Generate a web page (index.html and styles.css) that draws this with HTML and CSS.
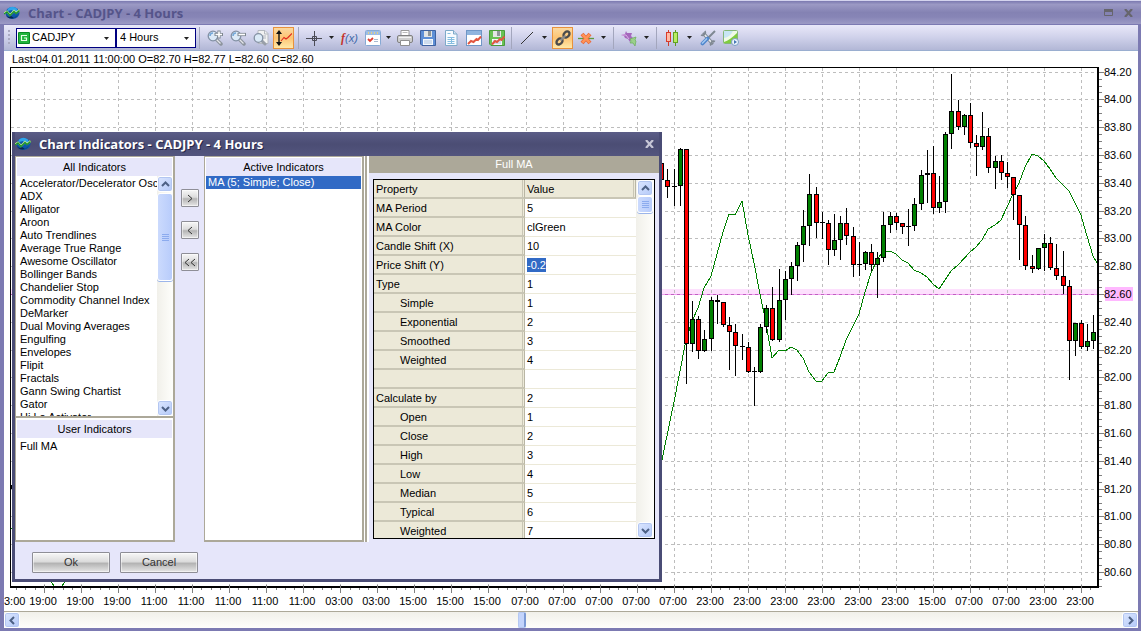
FILE: index.html
```html
<!DOCTYPE html>
<html lang="en">
<head>
<meta charset="utf-8">
<title>Chart - CADJPY - 4 Hours</title>
<link rel="stylesheet" href="styles.css">
</head>
<body>
<svg class="defs" aria-hidden="true">
  <defs>
    <symbol id="globe" viewBox="0 0 16 14">
      <ellipse cx="8.500" cy="7" rx="7" ry="6" fill="#0d56a8"/>
      <path d="M3.500 3Q8-1 13 2.500L14 6 10 7 8 4 4 5Z" fill="#2fa4ea"/>
      <path d="M2 9l2 2 3-1 3 2 4-3Q9 15 3 11Z" fill="#07284f"/>
      <path d="M0 7.500l3-2 3 3.500 4-4 2 2 3.500-3" fill="none" stroke="#c9ee9a" stroke-width="2"/>
      <path d="M0 8l3-2 3 3.500 4-4 2 2 3.500-3" fill="none" stroke="#178f2c" stroke-width="1.400"/>
    </symbol>
    <symbol id="up" viewBox="0 0 9 9"><path d="M1 6L4.500 2.500 8 6" fill="none" stroke="#4d6185" stroke-width="2"/></symbol>
    <symbol id="down" viewBox="0 0 9 9"><path d="M1 3L4.500 6.500 8 3" fill="none" stroke="#4d6185" stroke-width="2"/></symbol>
    <symbol id="left" viewBox="0 0 9 9"><path d="M6 1L2.500 4.500 6 8" fill="none" stroke="#4d6185" stroke-width="2"/></symbol>
    <symbol id="right" viewBox="0 0 9 9"><path d="M3 1L6.500 4.500 3 8" fill="none" stroke="#4d6185" stroke-width="2"/></symbol>
    <symbol id="caret" viewBox="0 0 5 3"><path d="M0 0H5L2.500 3Z" fill="#222"/></symbol>
    <symbol id="lens" viewBox="0 0 16 16">
      <path d="M9 9l5 5" stroke="#8d949e" stroke-width="3.500" stroke-linecap="round"/>
      <path d="M9 9l4.500 4.500" stroke="#e4e6ea" stroke-width="1.200"/>
      <circle cx="6" cy="6" r="4.800" fill="#dceaf8" stroke="#8290a4" stroke-width="1.300"/>
      <path d="M3 6a3 3 0 0 1 3-3" fill="none" stroke="#74a7d8" stroke-width="1.500"/>
    </symbol>
    <symbol id="floppy" viewBox="0 0 16 16">
      <path d="M.5.5h15v15H2L.5 14Z" stroke-width="1"/>
      <path d="M4 1h8v6H4Z" fill="#e4e6e6" stroke="none"/><path d="M8 1h3v5H8Z" fill="#8f9599" stroke="none"/>
      <path d="M3 9h10v6H3Z" fill="#f4f8fd" stroke="none"/>
      <path d="M4 11h8M4 13h8" stroke="#a8c0de"/>
    </symbol>
  </defs>
</svg>
<main class="window">
  <header class="titlebar">
    <svg class="globe"><use href="#globe"/></svg>
    <h1 class="title">Chart - CADJPY - 4 Hours</h1>
    <button class="winbtn" aria-label="Maximize"><svg width="9" height="7"><path d="M.5.5h8v6h-8Z" fill="none" stroke="#66656c"/><path d="M0 0h9v3H0Z" fill="#66656c"/></svg></button>
    <button class="winbtn" aria-label="Close"><svg width="9" height="8"><path d="M1 0l7 8M8 0L1 8" stroke="#66656c" stroke-width="2.200"/></svg></button>
  </header>
  <div class="body">
    <nav class="toolbar" aria-label="Chart tools">
      <span class="grip"></span>
      <div class="combo combo-symbol">
        <svg class="flag" viewBox="0 0 12 12"><rect width="12" height="12" rx="1" fill="#0a8a24"/><rect x="1" y="1" width="10" height="10" fill="#22b53c"/><path d="M9 3.500H3.500v5H8.500V6H6" fill="none" stroke="#e8ffe8" stroke-width="1.200"/></svg>
        <select aria-label="Symbol"><option>CADJPY</option></select>
        <svg class="caret"><use href="#caret"/></svg>
      </div>
      <div class="combo combo-period">
        <select aria-label="Period"><option>4 Hours</option></select>
        <svg class="caret"><use href="#caret"/></svg>
      </div>
      <span class="sep"></span>
      <button class="tool" aria-label="Zoom in"><svg viewBox="0 0 16 16"><use href="#lens"/><path d="M7.500 4.500h8.500M12 .5v8" stroke="#7e8790" stroke-width="3.200"/><path d="M8.500 4.500h6.500M12 1.500v6" stroke="#fff" stroke-width="1.600"/></svg></button>
      <button class="tool" aria-label="Zoom out"><svg viewBox="0 0 16 16"><use href="#lens"/><path d="M7.500 4.500h8.500" stroke="#7e8790" stroke-width="3.200"/><path d="M8.500 4.500h6.500" stroke="#fff" stroke-width="1.600"/></svg></button>
      <button class="tool" aria-label="Zoom to fit"><svg viewBox="0 0 16 16"><path d="M5 .5h7l3 3v10H5Z" fill="#f2f2f2" stroke="#b5b9c0"/><path d="M11.500.5v3.500H15M8 6h5M9 8h4" fill="none" stroke="#b5b9c0"/><path d="M9 11l3 3" stroke="#999fa8" stroke-width="3" stroke-linecap="round"/><circle cx="5.500" cy="8" r="4.300" fill="#dbeaf7" stroke="#8491a3" stroke-width="1.300"/></svg></button>
      <button class="tool tool-on" aria-label="Scale" aria-pressed="true"><svg viewBox="0 0 16 16"><path d="M3 2v12" stroke="#111" stroke-width="1.400"/><path d="M0 4L3 0l3 4ZM0 12l3 4 3-4Z" fill="#111"/><path d="M5 11l3-3.500 2 1.500 2-1.500 4-4" fill="none" stroke="#e02a20" stroke-width="1.100"/></svg></button>
      <span class="sep"></span>
      <button class="tool" aria-label="Crosshair"><svg viewBox="0 0 16 16"><path d="M0 8.500h16M8.500 1v15" stroke="#4b4b55"/><path d="M6.500 6.500h4v4h-4Z" fill="none" stroke="#4b4b55"/></svg></button>
      <button class="drop" aria-label="Crosshair options"><svg><use href="#caret"/></svg></button>
      <button class="tool fx" aria-label="Indicators"><b>f</b><i>(x)</i></button>
      <button class="tool" aria-label="Templates"><svg viewBox="0 0 16 16"><rect x=".5" y=".5" width="15" height="15" rx="1" fill="#fff" stroke="#86a9d4"/><path d="M1 1h14v4H1Z" fill="#9dbde6"/><path d="M3 3h1M6 3h1M9 3h1M12 3h1" stroke="#f7d66b" stroke-width="1.500"/><path d="M3 9l2 2 3-3" fill="none" stroke="#dd3e33" stroke-width="1.800"/><path d="M9 9.500h4M9 11.500h4" stroke="#a9bad0"/></svg></button>
      <button class="drop drop-narrow" aria-label="Template options"><svg><use href="#caret"/></svg></button>
      <button class="tool" aria-label="Print"><svg viewBox="0 0 16 16"><path d="M4 6V.5h8V6" fill="#fff" stroke="#9a9a9a"/><path d="M5.500 2.500h5" stroke="#bbb"/><rect x=".5" y="5.500" width="15" height="7" rx="1.500" fill="#cfcfcf" stroke="#808080"/><path d="M2 7.500h12" stroke="#f3f3f3"/><path d="M3.500 10.500h9v5h-9Z" fill="#fff" stroke="#909090"/></svg></button>
      <button class="tool" aria-label="Save"><svg viewBox="0 0 16 16" fill="#5f8fd6" stroke="#3f62a0"><use href="#floppy"/></svg></button>
      <button class="tool" aria-label="Report"><svg viewBox="0 0 16 16"><path d="M2.500.5h8l3.500 3.500v11.500H2.500Z" fill="#f7fbff" stroke="#7ea9c9"/><path d="M10.500.5v3.500H14" fill="#cfe2f2" stroke="#7ea9c9"/><path d="M4.500 7.500h7M4.500 9.500h7M4.500 11.500h7M4.500 13.500h7M8.500 7v7M4.500 3.500h3" stroke="#85bde0"/></svg></button>
      <button class="tool" aria-label="Load chart"><svg viewBox="0 0 16 16"><rect x=".5" y=".5" width="15" height="15" fill="#fff" stroke="#6f96c6"/><path d="M1 1h14v4H1Z" fill="#8fb4de"/><path d="M2 14l3-3 2.500 1 3-3 1.500 1 3-3.500" fill="none" stroke="#e2553f" stroke-width="2"/></svg></button>
      <button class="tool" aria-label="Save chart"><svg viewBox="0 0 16 16" fill="#68c254" stroke="#4a9a3b"><use href="#floppy"/><path d="M3 14.500l3-3.500 2 1 3-3 1.500 1 3-3.500" fill="none" stroke="#e2553f" stroke-width="2"/></svg></button>
      <span class="sep"></span>
      <button class="tool" aria-label="Line"><svg viewBox="0 0 16 16"><path d="M2 14L14 2" stroke="#333"/></svg></button>
      <button class="drop" aria-label="Line options"><svg><use href="#caret"/></svg></button>
      <button class="tool tool-on" aria-label="Link" aria-pressed="true"><svg viewBox="0 0 16 16"><g fill="none" stroke="#4b4b4b" stroke-width="2.400"><ellipse cx="11.500" cy="4.500" rx="3.400" ry="2.500" transform="rotate(-45 11.500 4.500)"/><ellipse cx="4.500" cy="11.500" rx="3.400" ry="2.500" transform="rotate(-45 4.500 11.500)"/></g><path d="M5.500 10.500l5-5" stroke="#8b8b8b" stroke-width="2"/></svg></button>
      <button class="tool" aria-label="Delete object"><svg viewBox="0 0 16 16"><path d="M0 8.500h16" stroke="#5e9a3e" stroke-width="1.300"/><path d="M4 4l8 9M12 4l-8 9" stroke="#e8693b" stroke-width="4"/><path d="M4.500 4.500l7 8M11.500 4.500l-7 8" stroke="#ff9457" stroke-width="2.500"/></svg></button>
      <button class="drop" aria-label="Delete options"><svg><use href="#caret"/></svg></button>
      <span class="sep"></span>
      <button class="tool" aria-label="Signals"><svg viewBox="0 0 16 16"><path d="M0 5l4-1 1-3 1 2 5 0-1 3 2 2-2 1-1 3-2-3-3-1-1-2Z" fill="#a568bd"/><path d="M1 5l4 0 3 4" fill="none" stroke="#dcb0e8"/><path d="M9 9l6-2-1 3 1 1-1 5-2-3-3 0 1-2Z" fill="#9ad08a" stroke="#6aae58" stroke-width=".7"/></svg></button>
      <button class="drop" aria-label="Signal options"><svg><use href="#caret"/></svg></button>
      <span class="sep"></span>
      <button class="tool" aria-label="Chart type"><svg viewBox="0 0 16 16"><path d="M4.500 0v16" stroke="#cc3b2e"/><rect x="2.500" y="2.500" width="4" height="9" fill="#ffb9a5" stroke="#d93b2b"/><path d="M11.500 0v16" stroke="#5c9a22"/><rect x="9.500" y="2.500" width="4" height="10" fill="#b8ec62" stroke="#62a322"/></svg></button>
      <button class="drop" aria-label="Chart type options"><svg><use href="#caret"/></svg></button>
      <button class="tool" aria-label="Settings"><svg viewBox="0 0 16 16"><path d="M4 4l8 9" stroke="#7f8892" stroke-width="3.400" stroke-linecap="round"/><path d="M4 4l8 9" stroke="#e8ebee" stroke-width="1.800"/><path d="M1 5a3 3 0 0 0 4-4M11 15.500a3 3 0 0 1 4-4" fill="none" stroke="#7f8892" stroke-width="1.800"/><path d="M15 1L8 8" stroke="#7f8892" stroke-width="2"/><path d="M7.500 8.500l-5 5" stroke="#4f86cc" stroke-width="3.800" stroke-linecap="round"/><path d="M7 8.500l-5 5" stroke="#a5caf2" stroke-width="1.400"/></svg></button>
      <button class="tool" aria-label="Replay"><svg viewBox="0 0 16 16"><rect x=".5" y=".5" width="14" height="13" rx="1" fill="#f0fae6" stroke="#84b778"/><path d="M1 12Q7 10 14 3v10H1Z" fill="#80cc3f"/><path d="M1 8Q7 7 10 1H1Z" fill="#c8e6f4"/><circle cx="12" cy="12" r="3.500" fill="#eef5fc" stroke="#7b9dc4"/><path d="M11 10l3 2-3 2Z" fill="#4576b4"/></svg></button>
    </nav>
    <p class="info">Last:04.01.2011 11:00:00 O=82.70 H=82.77 L=82.60 C=82.60</p>
    <svg class="chart" id="chart" viewBox="4 67 1134 544" role="img" aria-label="CADJPY candlestick chart"></svg>
    <div class="hscroll">
      <button class="sbtn" aria-label="Scroll left"><svg><use href="#left"/></svg></button>
      <div class="htrack"><span class="hthumb"></span></div>
      <button class="sbtn" aria-label="Scroll right"><svg><use href="#right"/></svg></button>
    </div>
  </div>

  <section class="dialog" role="dialog" aria-labelledby="dlg-title">
    <header class="dlg-head">
      <svg class="globe"><use href="#globe"/></svg>
      <h2 class="title" id="dlg-title">Chart Indicators - CADJPY - 4 Hours</h2>
      <button class="winbtn" aria-label="Close dialog"><svg width="9" height="8"><path d="M1 0l7 8M8 0L1 8" stroke="#c6c6d6" stroke-width="2.200"/></svg></button>
    </header>
    <div class="dlg-body">
      <div class="panel">
        <h3 class="panel-head">All Indicators</h3>
        <div class="list-wrap">
          <ul class="list">
            <li>Accelerator/Decelerator Osc</li><li>ADX</li><li>Alligator</li><li>Aroon</li><li>Auto Trendlines</li><li>Average True Range</li><li>Awesome Oscillator</li><li>Bollinger Bands</li><li>Chandelier Stop</li><li>Commodity Channel Index</li><li>DeMarker</li><li>Dual Moving Averages</li><li>Engulfing</li><li>Envelopes</li><li>Flipit</li><li>Fractals</li><li>Gann Swing Chartist</li><li>Gator</li><li>Hi Lo Activator</li>
          </ul>
          <div class="vscroll">
            <button class="sbtn" aria-label="Scroll up"><svg><use href="#up"/></svg></button>
            <span class="vthumb vthumb-long"></span>
            <button class="sbtn sbtn-end" aria-label="Scroll down"><svg><use href="#down"/></svg></button>
          </div>
        </div>
        <h3 class="panel-head panel-head-user">User Indicators</h3>
        <ul class="list list-user"><li>Full MA</li></ul>
      </div>
      <div class="movers">
        <button class="metal mover" aria-label="Add"><svg viewBox="0 0 10 9"><path d="M3 1l4 3.500L3 8" /></svg></button>
        <button class="metal mover" aria-label="Remove"><svg viewBox="0 0 10 9"><path d="M7 1L3 4.500 7 8" /></svg></button>
        <button class="metal mover" aria-label="Remove all"><svg viewBox="0 0 10 9"><path d="M4 1L0 4.500 4 8M10 1L6 4.500 10 8" /></svg></button>
      </div>
      <div class="panel">
        <h3 class="panel-head">Active Indicators</h3>
        <ul class="list list-active"><li class="picked">MA (5; Simple; Close)</li></ul>
      </div>
      <span class="splitter"></span>
      <div class="props">
        <h3 class="props-head">Full MA</h3>
        <div class="grid">
          <table>
            <thead><tr><th scope="col">Property</th><th scope="col">Value</th></tr></thead>
            <tbody>
              <tr><th scope="row">MA Period</th><td>5</td></tr>
              <tr><th scope="row">MA Color</th><td>clGreen</td></tr>
              <tr><th scope="row">Candle Shift (X)</th><td>10</td></tr>
              <tr><th scope="row"><label for="shift-y">Price Shift (Y)</label></th><td><input id="shift-y" class="edit" value="-0.2"></td></tr>
              <tr><th scope="row">Type</th><td>1</td></tr>
              <tr><th scope="row" class="sub">Simple</th><td>1</td></tr>
              <tr><th scope="row" class="sub">Exponential</th><td>2</td></tr>
              <tr><th scope="row" class="sub">Smoothed</th><td>3</td></tr>
              <tr><th scope="row" class="sub">Weighted</th><td>4</td></tr>
              <tr><th></th><td></td></tr>
              <tr><th scope="row">Calculate by</th><td>2</td></tr>
              <tr><th scope="row" class="sub">Open</th><td>1</td></tr>
              <tr><th scope="row" class="sub">Close</th><td>2</td></tr>
              <tr><th scope="row" class="sub">High</th><td>3</td></tr>
              <tr><th scope="row" class="sub">Low</th><td>4</td></tr>
              <tr><th scope="row" class="sub">Median</th><td>5</td></tr>
              <tr><th scope="row" class="sub">Typical</th><td>6</td></tr>
              <tr><th scope="row" class="sub">Weighted</th><td>7</td></tr>
            </tbody>
          </table>
          <div class="vscroll">
            <button class="sbtn" aria-label="Scroll up"><svg><use href="#up"/></svg></button>
            <span class="vthumb"></span>
            <button class="sbtn sbtn-end" aria-label="Scroll down"><svg><use href="#down"/></svg></button>
          </div>
        </div>
      </div>
    </div>
    <footer class="dlg-foot">
      <button class="metal push">Ok</button>
      <button class="metal push">Cancel</button>
    </footer>
  </section>
</main>
<script src="chart.js"></script>
</body>
</html>
```
FILE: styles.css
```css
* { box-sizing: border-box; }
body { margin: 0; font: 11px/13px "Liberation Sans", Arial, sans-serif; color: #000; background: #fff; }
h1, h2, h3, p, ul { margin: 0; padding: 0; font-size: inherit; font-weight: normal; }
ul { list-style: none; }
button, select, input { font: inherit; color: inherit; margin: 0; padding: 0; border: 0; background: none; border-radius: 0; }
svg { display: block; }
.defs { position: absolute; width: 0; height: 0; }

.window { position: relative; min-height: 100vh; display: flex; flex-direction: column; border-top: 1px solid #d4d4ee; background: #7c7ab2; }
.titlebar { display: flex; align-items: center; gap: 8px; height: 23px; padding: 0 7px 0 4px; background: linear-gradient(#7b79b0, #9b99c4 15%, #8482b3 50%, #8785b6 70%, #9c9ac5); }
.globe { width: 16px; height: 14px; flex: none; }
.title { flex: 1; font: bold 13px/20px "Open Sans", "Noto Sans", sans-serif; color: #55548a; white-space: nowrap; }
.winbtn { width: 12px; height: 12px; display: grid; place-items: center; }
.body { flex: 1; display: flex; flex-direction: column; margin: 1px 3px 3px 4px; background: #fff; }

.toolbar { display: flex; align-items: center; height: 26px; padding-left: 4px; background: linear-gradient(#e9e8f9, #cfd1ea 50%, #b2b7d6); border-bottom: 1px solid #9aaed0; }
.grip { width: 2px; height: 15px; margin-right: 6px; background: repeating-linear-gradient(#aaaac2 0 2px, transparent 2px 4px); }
.combo { position: relative; display: flex; align-items: center; height: 20px; background: #fff; border: 1px solid #000080; }
.combo-symbol { width: 100px; padding-left: 1px; }
.combo-period { width: 80px; padding-left: 3px; }
.combo select { flex: 1; min-width: 0; height: 18px; appearance: none; outline: 0; }
.flag { width: 12px; height: 12px; margin-right: 2px; }
.caret { position: absolute; right: 6px; top: 8px; width: 5px; height: 3px; pointer-events: none; }
.sep { width: 1px; height: 22px; margin: 0 3px; background: #a3a6bd; }
.tool { width: 23px; height: 22px; display: grid; place-items: center; flex: none; }
.tool svg { width: 16px; height: 16px; }
.tool-on { border: 1px solid #e8923c; background: linear-gradient(#fbd9a0, #fdc473 50%, #ffe9a8); margin: 0 1px; width: 21px; }
.drop { width: 13px; height: 22px; display: grid; place-items: center; flex: none; }
.drop-narrow { width: 9px; }
.drop svg { width: 5px; height: 3px; }
.fx { display: flex; align-items: center; justify-content: center; font: italic bold 12px/16px "Liberation Serif", serif; color: #c4342c; }
.fx i { font: italic 11px/16px "Liberation Sans", sans-serif; color: #4168a8; }

.info { height: 16px; padding-left: 8px; line-height: 16px; }
.chart { width: 100%; height: auto; }
.chart text { font: 11px "Liberation Sans", Arial, sans-serif; }

.sbtn { width: 16px; height: 16px; flex: none; display: grid; place-items: center; border: 1px solid #fff; border-radius: 3px; background: linear-gradient(135deg, #dbe6ff, #b4c9f8); box-shadow: inset 0 0 0 1px #b3c6f1; }
.sbtn svg { width: 9px; height: 9px; }
.sbtn-end { margin-top: auto; }
.hscroll { display: flex; height: 17px; border-top: 1px solid #aca899; background: linear-gradient(#f1f0ea, #fefefb); }
.htrack { flex: 1; display: flex; }
.hthumb { width: 8px; height: 16px; margin-left: 45.2%; border: 1px solid #b4c8f2; border-right: 2px solid #7d9bd6; border-radius: 2px; background: #c3d4fc; }
.vscroll { width: 16px; display: flex; flex-direction: column; background: linear-gradient(90deg, #f1f0ea, #fefefb); }
.vthumb { height: 17px; border: 1px solid #fff; border-radius: 3px; background: repeating-linear-gradient(#8cabee 0 1px, transparent 1px 2px) center / 7px 7px no-repeat, linear-gradient(90deg, #cbdafd, #b8ccfb); box-shadow: 0 1px #9cb5ea; }
.vthumb-long { height: 88px; margin-top: 1px; }

.dialog { position: absolute; left: 12px; top: 131px; width: 650px; border: solid #4a4c75; border-width: 0 3px 3px; background: #e6e6fa; }
.dlg-head { display: flex; align-items: center; gap: 8px; height: 24px; padding-right: 4px; background: linear-gradient(#5b5d87, #4b4d74 50%, #53557e); }
.dlg-head .title { color: #fff; text-shadow: 1px 1px #25264a; }
.dlg-body { display: flex; height: 386px; }
.panel { width: 160px; display: flex; flex-direction: column; background: #fff; border: solid #aca899; border-width: 1px 2px 2px 1px; }
.panel-head { height: 18px; margin: 1px 1px 0; line-height: 18px; text-align: center; background: #e6e6fa; }
.panel-head-user { height: 20px; border-top: 2px solid #fff; margin-top: 0; }
.list-wrap { display: flex; height: 242px; overflow: hidden; border-bottom: 2px solid #aca899; }
.list { flex: 1; padding: 1px 1px 0 4px; white-space: nowrap; overflow: hidden; }
.list-user { padding-top: 2px; }
.list-active { padding: 0 1px; }
.picked { padding: 0 2px; background: #316ac5; color: #fff; }
.movers { width: 29px; padding: 33px 6px 0 6px; display: flex; flex-direction: column; gap: 14px; }
.metal { border: 1px solid #8e8e96; border-radius: 1px; color: #333; background: linear-gradient(#f7f7f7, #dcdcdc 45%, #b4b4b4 55%, #e6e6e6); box-shadow: inset 0 0 0 1px #ffffff80; }
.mover { width: 18px; height: 18px; display: grid; place-items: center; }
.mover svg { width: 10px; height: 9px; fill: none; stroke: #333; }
.splitter { width: 5px; border: solid #fff; border-width: 0 2px 0 1px; background: #aca899; }
.props { flex: 1; }
.props-head { height: 17px; line-height: 17px; text-align: center; color: #fff; background: #aca899; }
.grid { display: flex; height: 360px; margin: 6px 4px 0; border: 1px solid #000; background: #ece9d8; overflow: hidden; }
.grid table { flex: 1; border-collapse: separate; border-spacing: 0; table-layout: fixed; background: #fff; }
.grid .vscroll { width: 18px; padding: 0 1px; }
.grid th, .grid td { height: 19px; padding: 0 2px; font-weight: normal; text-align: left; line-height: 16px; white-space: nowrap; }
.grid th { background: #ece9d8; border-bottom: 2px solid #c9c6b5; border-right: 1px solid #b9b6a4; box-shadow: inset -1px 0 #ece9d8, inset -2px 0 #c9c6b5; }
.grid th:first-child { width: 151px; }
.grid .sub { padding-left: 26px; }
.grid td { border-bottom: 1px solid #ece9d8; }
.edit { display: block; width: 19px; height: 14px; background: #316ac5; color: #fff; outline: 0; }
.dlg-foot { display: flex; gap: 10px; padding: 10px 17px 6px; }
.push { width: 78px; height: 21px; }
```
FILE: chart.js
```javascript
const svg = document.getElementById('chart');
const out = [];
const line = (x1, y1, x2, y2, stroke, extra = '') =>
  out.push(`<line x1="${x1}" y1="${y1}" x2="${x2}" y2="${y2}" stroke="${stroke}" ${extra}/>`);
const rect = (x, y, w, h, fill, extra = '') =>
  out.push(`<rect x="${x}" y="${y}" width="${w}" height="${h}" fill="${fill}" ${extra}/>`);

const times = ['19:00', '19:00', '19:00', '11:00', '11:00', '11:00', '11:00', '11:00', '03:00', '03:00',
  '15:00', '15:00', '15:00', '07:00', '07:00', '07:00', '07:00', '07:00', '23:00', '23:00', '23:00',
  '23:00', '23:00', '23:00', '15:00', '07:00', '07:00', '23:00', '23:00'];
const timeX = i => Math.round(44 + i * 37.04) + 0.5;
const priceY = i => Math.round(71.6 + i * 27.8) + 0.5;

out.push('<g shape-rendering="crispEdges">');
rect(11, 289, 1086, 5, '#fde0fd');
times.forEach((t, i) => line(timeX(i), 68, timeX(i), 586, '#bdbdbd', 'stroke-dasharray="3 3"'));
for (let i = 0; i < 19; i++) line(11, priceY(i), 1097, priceY(i), '#bdbdbd', 'stroke-dasharray="3 3"');
line(11, 294.5, 1097, 294.5, '#f0a0f0');
line(11, 294.5, 1097, 294.5, '#c060c0', 'stroke-dasharray="3 3"');

const average = '662,460 670,421 674,402 680,371 686,340 692,321 698,308 704,288 711,276 717,254 723,232 729,214 735,215 742,201 748,235 754,263 760,294 766,323 772,358 779,350 785,351 791,347 797,350 803,358 809,372 816,381 822,381 828,373 834,372 840,357 846,340 859,314 865,292 871,273 877,260 883,251 890,251 896,254 902,260 908,263 914,270 921,273 927,277 933,284 939,289 945,280 951,271 958,265 970,252 976,247 982,240 988,229 995,225 1001,220 1007,207 1013,194 1019,183 1025,167 1032,154 1038,156 1044,161 1050,169 1056,178 1063,185 1069,191 1075,203 1081,215 1087,236 1093,256 1097,263';
out.push(`<polyline points="${average}" fill="none" stroke="#008000"/>`);
out.push('<path d="M51 582l4 5M65 582l-4 5M11 528.500h2" fill="none" stroke="#008000"/>');
rect(11, 485, 2, 4, '#000');

// x, high, low, body top, body bottom, kind (g rising, r falling, d flat)
const candles = `661 163 180 163 180 r|667 169 198 180 187 r|674 169 206 186 186 d|680 148 206 149 186 g|686 149 384 149 344 r
692 301 352 319 344 g|698 316 359 319 351 r|704 330 352 339 351 g|711 297 351 300 339 g|717 295 324 300 301 d
723 302 327 302 325 r|729 317 370 325 332 r|735 324 376 332 346 r|742 334 360 346 346 d|748 342 373 347 372 r
754 367 406 371 371 d|760 324 373 327 372 g|766 305 333 308 327 g|772 287 341 308 340 r|779 269 342 300 340 g
785 271 320 279 300 g|791 262 295 266 279 g|797 242 281 245 266 g|803 210 262 226 245 g|809 174 246 194 226 g
816 187 238 194 223 r|822 212 239 222 222 d|828 220 265 223 250 r|834 214 256 240 250 g|840 216 260 223 240 g
846 208 245 223 236 r|853 227 277 236 265 r|859 242 276 264 264 d|865 251 270 252 264 g|871 244 271 252 265 r
877 252 298 258 265 g|883 212 262 225 258 g|890 212 233 216 225 g|896 213 230 216 223 r|902 223 234 223 227 r
908 209 246 226 226 d|914 198 231 204 226 g|921 170 210 175 204 g|927 150 203 173 174 d|933 146 214 173 208 r
939 176 213 202 208 g|945 132 213 134 202 g|951 74 149 111 134 g|958 100 130 111 127 r|964 114 135 115 127 g
970 103 148 115 143 r|976 135 176 143 147 r|982 112 150 136 147 g|988 128 173 136 168 r|995 156 189 161 168 g
1001 155 180 161 173 r|1007 162 188 173 177 r|1013 177 220 177 195 r|1019 195 260 195 225 r|1025 216 270 225 266 r
1032 255 273 266 269 r|1038 248 270 248 269 g|1044 234 271 243 248 g|1050 237 270 243 268 r|1056 244 280 268 276 r
1063 251 294 276 286 r|1069 280 380 286 341 r|1075 323 356 323 341 g|1081 320 349 323 347 r|1087 324 351 341 347 g
1093 315 349 332 341 g`.split(/[|\n]/).map(row => row.split(' '));
for (const [xs, hi, lo, t, b, kind] of candles) {
  const x = +xs, top = +t, bottom = +b;
  rect(x, hi, 1, lo - hi, '#000');
  if (kind === 'd') rect(x - 2, top, 5, bottom - top + 1, '#000');
  else rect(x - 1.5, top + 0.5, 4, Math.max(bottom - top - 1, 2), kind === 'g' ? '#008000' : '#f00', 'stroke="#000"');
}

rect(10, 67, 1089, 1, '#000');
rect(10, 67, 1, 520, '#000');
rect(1097, 67, 2, 521, '#000');
rect(10, 586, 1089, 2, '#000');
rect(1105, 287, 28, 14, '#ffb8ff');
for (let i = 0; i < 76; i++) {
  const y = Math.round(71.6 + i * 6.95) + 0.5;
  if (y < 587) line(1099, y, i % 4 ? 1102 : 1104, y, '#808080');
}
for (let i = -3; i < 116; i++) {
  const x = Math.round(44 + i * 9.26) + 0.5;
  if (x < 1099) line(x, i % 4 ? 588 : 585, x, i % 4 ? 590 : 593, '#808080');
}
out.push('</g>');
for (let i = 0; i < 19; i++) out.push(`<text x="1104" y="${priceY(i) + 3.5}">${(84.2 - i * 0.2).toFixed(2)}</text>`);
out.push('<text x="4" y="605">3:00</text>');
times.forEach((t, i) => out.push(`<text x="${timeX(i) - 1.5}" y="605" text-anchor="middle">${t}</text>`));
svg.innerHTML = out.join('');
```
